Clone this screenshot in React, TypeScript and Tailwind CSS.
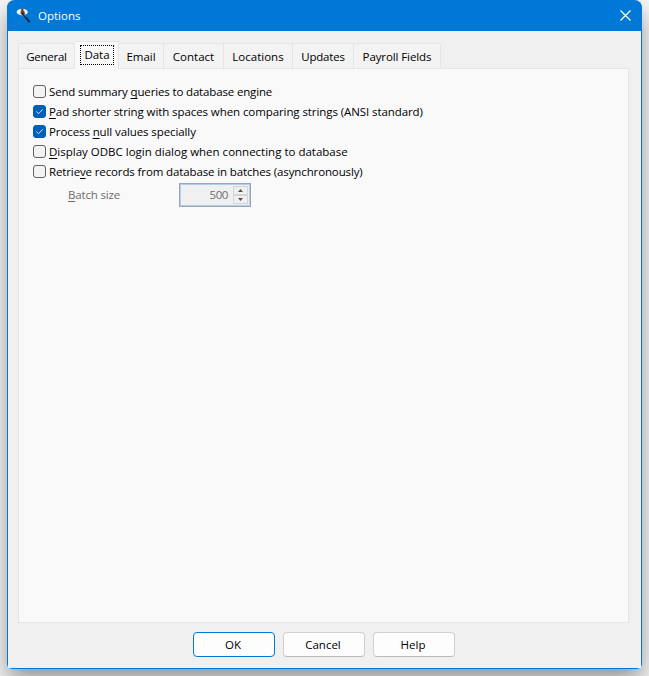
import { clsx } from 'clsx'

interface Tab {
  label: string
  width: string
  tracking: string
}

interface Option {
  id: string
  before: string
  accessKey: string
  after: string
  checked: boolean
  tracking: string
}

const tabs: Tab[] = [
  { label: 'General', width: 'w-[57px]', tracking: 'tracking-[-0.25px]' },
  { label: 'Data', width: 'w-[44px]', tracking: 'tracking-normal' },
  { label: 'Email', width: 'w-[45px]', tracking: 'tracking-normal' },
  { label: 'Contact', width: 'w-[60px]', tracking: 'tracking-normal' },
  { label: 'Locations', width: 'w-[69px]', tracking: 'tracking-normal' },
  { label: 'Updates', width: 'w-[61px]', tracking: 'tracking-[-0.2px]' },
  { label: 'Payroll Fields', width: 'w-[87px]', tracking: 'tracking-[-0.1px]' },
]

const options: Option[] = [
  { id: 'summary', before: 'Send summary ', accessKey: 'q', after: 'ueries to database engine', checked: false, tracking: 'tracking-[-0.15px]' },
  { id: 'pad', before: '', accessKey: 'P', after: 'ad shorter string with spaces when comparing strings (ANSI standard)', checked: true, tracking: 'tracking-[-0.085px]' },
  { id: 'null', before: 'Process ', accessKey: 'n', after: 'ull values specially', checked: true, tracking: 'tracking-[-0.1px]' },
  { id: 'odbc', before: '', accessKey: 'D', after: 'isplay ODBC login dialog when connecting to database', checked: false, tracking: 'tracking-normal' },
  { id: 'batch', before: 'Retrie', accessKey: 'v', after: 'e records from database in batches (asynchronously)', checked: false, tracking: 'tracking-[-0.125px]' },
]

function AppIcon() {
  return (
    <svg className="h-[18px] w-4" viewBox="0 0 16 18">
      <ellipse cx="6.2" cy="5" rx="5.6" ry="3.3" fill="#e9f1f6" />
      <path d="M5.2 1.5h2.2v2l1.2 1v2.5H4.6V4.5l.6-1z" fill="#6b3f2b" />
      <path d="M5 6h3.4v2H6z" fill="#20252d" />
      <path d="M7.4 7.5l6.2 7.6" stroke="#15202c" strokeWidth="1.7" />
      <path d="M8 7.5l2 2.4" stroke="#8b8178" strokeWidth=".7" />
    </svg>
  )
}

function Checkbox({ checked }: { checked: boolean }) {
  return (
    <span
      className={clsx(
        'flex h-[13px] w-[13px] shrink-0 items-center justify-center rounded-[3px] border',
        checked ? 'border-[#005fb8] bg-[#005fb8]' : 'border-[#626262] bg-[#f3f3f3]',
      )}
    >
      {checked && (
        <svg className="h-[11px] w-[11px]" viewBox="0 0 11 11" fill="none">
          <path d="M2.3 5.5l2.2 2.2 4.3-4.4" stroke="#d9e8f5" strokeWidth="1" />
        </svg>
      )}
    </span>
  )
}

function AccessKey({ children }: { children: string }) {
  return <span className="underline decoration-1 underline-offset-[2px] [text-decoration-skip-ink:none]">{children}</span>
}

function Spinner() {
  return (
    <div className="flex h-6 w-[72px] border border-[#a0a5b0]">
      <div className="flex flex-1 items-center justify-end border border-[#b0cdec] bg-[#f0f0f0] pr-px">
        <span className="mr-[5px] tracking-[-0.4px] text-[#6d6d6d]">500</span>
        <div className="flex h-[18px] w-[15px] flex-col">
          {['M0 3h5L2.5 0z', 'M0 0h5L2.5 3z'].map((arrow) => (
            <span key={arrow} className="flex h-[9px] items-center justify-center border border-[#d5d5d5] bg-[#f0f0f0]">
              <svg className="h-[3px] w-[5px]" viewBox="0 0 5 3">
                <path d={arrow} fill="#555" />
              </svg>
            </span>
          ))}
        </div>
      </div>
    </div>
  )
}

export default function App() {
  return (
    <div className="h-[676px] w-[649px] overflow-hidden bg-[#f7f7f7] px-[7px] font-['Open_Sans','Noto_Sans',sans-serif] text-[11.5px] leading-4 text-black">
      <div className="flex h-[669px] w-[635px] flex-col rounded-t-lg rounded-b-[5px] border border-t-0 border-[#0078d7] shadow-[0_12px_24px_rgba(0,0,0,0.4)]">
        {/* Title bar */}
        <div className="-mx-px flex h-[31px] shrink-0 items-center rounded-t-lg bg-[#0078d7] pl-[9px] pr-[11px] text-white">
          <AppIcon />
          <span className="ml-[6px] flex-1">Options</span>
          <svg className="h-[11px] w-[11px]" viewBox="0 0 11 11">
            <path d="M.5.5l10 10M10.5.5l-10 10" stroke="#fff" strokeWidth="1.2" />
          </svg>
        </div>

        <div className="flex-1 bg-[#f0f0f0] pt-[10px]">
          {/* Tabs */}
          <div className="relative z-10 ml-[10px] flex h-7 items-end">
            {tabs.map((tab, i) => (
              <div
                key={tab.label}
                className={clsx(
                  'flex shrink-0 items-center justify-center border-r border-t border-[#e5e5e5]',
                  tab.width,
                  tab.tracking,
                  i === 0 && 'border-l',
                  i === 1 ? 'h-7 bg-[#f9f9f9] pb-px' : 'mb-px h-[25px] bg-[#f3f3f3] pt-[2px]',
                )}
              >
                {i === 1 ? (
                  <span className="ml-px flex h-5 w-[34px] items-center justify-center border border-dotted border-black">{tab.label}</span>
                ) : (
                  tab.label
                )}
              </div>
            ))}
          </div>

          {/* Data page */}
          <div className="-mt-px ml-[10px] h-[555px] w-[611px] border border-[#e5e5e5] bg-[#f9f9f9] pl-[14px] pt-[12px]">
            {options.map((option) => (
              <div key={option.id} className="flex h-5 items-center gap-[3px]">
                <Checkbox checked={option.checked} />
                <span className={clsx('whitespace-pre pt-px', option.tracking)}>
                  {option.before}
                  <AccessKey>{option.accessKey}</AccessKey>
                  {option.after}
                </span>
              </div>
            ))}
            <div className="mt-[2px] flex items-center">
              <span className="ml-[35px] w-[111px] tracking-[-0.17px] text-[#6d6d6d]">
                <AccessKey>B</AccessKey>atch size
              </span>
              <Spinner />
            </div>
          </div>

          {/* Actions */}
          <div className="mt-[9px] flex gap-2 pl-[185px]">
            {['OK', 'Cancel', 'Help'].map((label, i) => (
              <button
                key={label}
                className={clsx(
                  'h-[25px] w-[82px] rounded-[4px] border bg-[#fdfdfd] pr-[2px]',
                  i === 0 ? 'border-[#0078d4]' : 'border-[#d0d0d0] border-b-[#bbb]',
                )}
              >
                {label}
              </button>
            ))}
          </div>
        </div>
      </div>
    </div>
  )
}
